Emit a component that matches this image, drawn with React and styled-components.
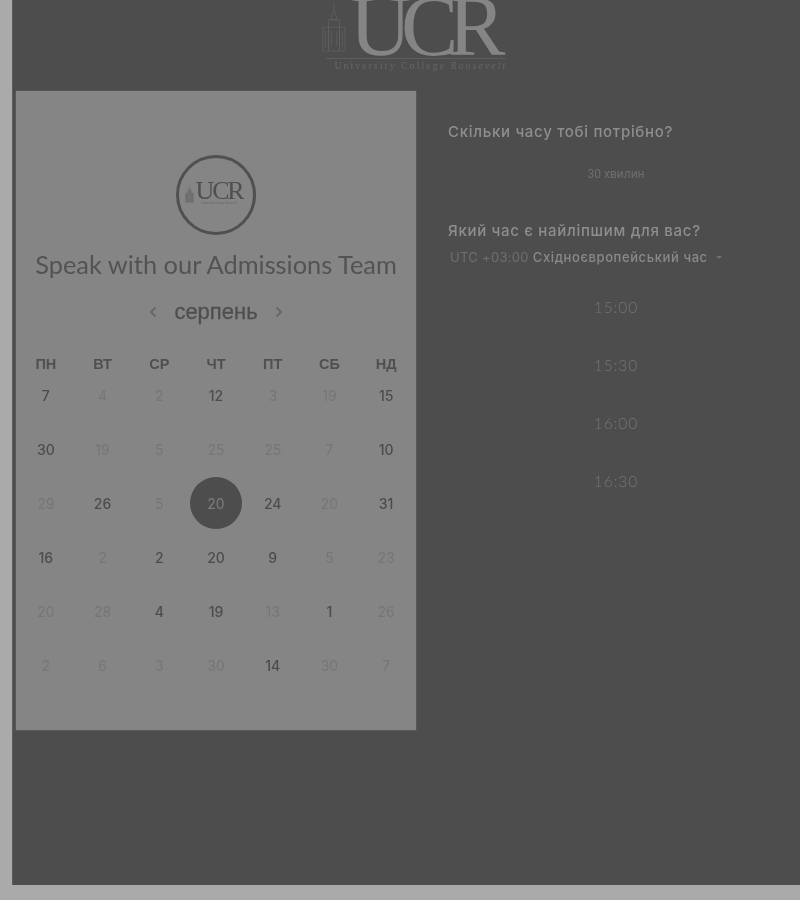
import React from 'react';
import styled, { createGlobalStyle } from 'styled-components';

const GlobalStyle = createGlobalStyle`
  html, body {
    margin: 0;
    padding: 0;
    background: #aaaaaa;
    font-family: "Liberation Sans", Arial, sans-serif;
  }
`;

const Page = styled.div`
  width: 800px;
  height: 900px;
  padding: 0 0 15px 12px;
  box-sizing: border-box;
  overflow: hidden;
`;

const Panel = styled.main`
  height: 100%;
  background: #4d4d4d;
  border-left: 1px solid #5c5c5c;
  box-sizing: border-box;
  overflow: hidden;
  filter: blur(0.35px);
`;

const LogoBar = styled.header`
  height: 91px;
  display: flex;
  justify-content: center;
  padding-left: 28px;
  box-sizing: border-box;
`;

const Logo = styled.div`
  position: relative;
  width: 190px;
  height: 91px;
`;

const LogoMark = styled.div`
  position: absolute;
  left: 24px;
  top: -10px;
  font-family: "Liberation Serif", serif;
  font-size: 86px;
  line-height: 72px;
  letter-spacing: -10.5px;
  color: #858585;
  white-space: nowrap;
`;

const LogoRule = styled.div`
  position: absolute;
  left: 0;
  top: 58px;
  width: 181px;
  height: 1px;
  background: #5c5c5c;
`;

const LogoTagline = styled.div`
  position: absolute;
  left: 9px;
  top: 61px;
  font-family: "Liberation Serif", serif;
  font-size: 9.5px;
  letter-spacing: 2.2px;
  color: #676767;
  white-space: nowrap;
`;

const TowerWrap = styled.div`
  position: absolute;
  left: -4px;
  top: 2px;
`;

const Columns = styled.div`
  display: flex;
  align-items: flex-start;
  padding-left: 3px;
`;

const Card = styled.section`
  width: 400px;
  height: 639px;
  background: #858585;
  box-shadow: 0 0 1px #8f8f8f;
  display: flex;
  flex-direction: column;
  align-items: center;
  padding-top: 64px;
  box-sizing: border-box;
`;

const Badge = styled.div`
  position: relative;
  width: 80px;
  height: 80px;
  border: 3px solid #505050;
  border-radius: 50%;
  box-sizing: border-box;
  display: flex;
  align-items: center;
  justify-content: center;
  flex-direction: column;
`;

const BadgeText = styled.div`
  font-family: "Liberation Serif", serif;
  font-size: 26px;
  line-height: 20px;
  letter-spacing: -2.2px;
  color: #4f4f4f;
  margin-left: 6px;
  margin-top: -4px;
`;

const BadgeSub = styled.div`
  font-family: "Liberation Serif", serif;
  font-size: 3px;
  line-height: 4px;
  color: #666666;
  margin-left: 6px;
`;

const BadgeTowerWrap = styled.div`
  position: absolute;
  left: 6px;
  top: 24px;
`;

const Title = styled.h1`
  margin: 12px 0 0;
  font-family: Lato, sans-serif;
  font-size: 25.4px;
  line-height: 34px;
  font-weight: 400;
  color: #535353;
  white-space: nowrap;
`;

const MonthRow = styled.div`
  display: flex;
  align-items: center;
  justify-content: center;
  gap: 15px;
  height: 30px;
  margin-top: 16px;
`;

const MonthName = styled.div`
  font-size: 22px;
  line-height: 30px;
  color: #4f4f4f;
  min-width: 86px;
  text-align: center;
  -webkit-text-stroke: 0.3px #4f4f4f;
`;

const Arrow = styled.svg`
  display: block;
  color: #666666;
`;

const HeadGrid = styled.div`
  width: 397px;
  margin-top: 22px;
  display: grid;
  grid-template-columns: repeat(7, 1fr);
`;

const DayHead = styled.div`
  height: 30px;
  display: flex;
  align-items: center;
  justify-content: center;
  font-size: 14.5px;
  font-weight: 700;
  color: #505050;
`;

const DayGrid = styled.div`
  width: 397px;
  margin-top: 5px;
  display: grid;
  grid-template-columns: repeat(7, 1fr);
  grid-auto-rows: 54px;
`;

const DayCell = styled.div`
  display: flex;
  align-items: flex-start;
  justify-content: center;
  padding-top: 1px;
`;

const DayNum = styled.span`
  width: ${(p) => (p.$selected ? '52px' : 'auto')};
  height: ${(p) => (p.$selected ? '52px' : '20px')};
  margin-top: ${(p) => (p.$selected ? '-16px' : '0')};
  border-radius: 50%;
  display: flex;
  align-items: center;
  justify-content: center;
  background: ${(p) => (p.$selected ? '#4d4d4d' : 'transparent')};
  font-family: Inter, sans-serif;
  font-size: 14px;
  font-weight: ${(p) => (p.$active ? 500 : 400)};
  color: ${(p) => (p.$selected ? '#7d7d7d' : p.$active ? '#4c4c4c' : '#767676')};
`;

const Side = styled.aside`
  margin-left: 32px;
  width: 320px;
  padding-top: 30px;
`;

const Question = styled.h2`
  margin: 0;
  font-family: Inter, sans-serif;
  font-size: 15px;
  line-height: 22px;
  font-weight: 500;
  letter-spacing: 0.7px;
  color: #8e8e8e;
  white-space: nowrap;
`;

const Duration = styled.div`
  width: 336px;
  margin-top: 21px;
  height: 20px;
  text-align: center;
  font-family: Roboto, sans-serif;
  font-size: 12px;
  line-height: 20px;
  color: #6e6e6e;
`;

const SecondQuestion = styled(Question)`
  margin-top: 36px;
`;

const Zone = styled.div`
  display: flex;
  align-items: center;
  margin-top: 4px;
  padding-left: 2px;
  height: 22px;
  font-family: Inter, sans-serif;
  font-size: 13px;
  letter-spacing: 0.3px;
  white-space: nowrap;
  color: #6f6f6f;
`;

const ZoneName = styled.span`
  margin-left: 4px;
  font-weight: 500;
  letter-spacing: 0.6px;
  color: #8a8a8a;
`;

const Caret = styled.span`
  margin-left: 8px;
  width: 0;
  height: 0;
  border-left: 3px solid transparent;
  border-right: 3px solid transparent;
  border-top: 3px solid #6f6f6f;
`;

const Slots = styled.div`
  width: 336px;
  margin-top: 28px;
  display: flex;
  flex-direction: column;
  gap: 36px;
`;

const Slot = styled.div`
  height: 22px;
  text-align: center;
  font-family: Lato, sans-serif;
  font-size: 15.5px;
  line-height: 22px;
  font-weight: 300;
  letter-spacing: 1px;
  color: #757575;
`;

const weekdays = ['ПН', 'ВТ', 'СР', 'ЧТ', 'ПТ', 'СБ', 'НД'];

// [number, active]
const days = [
  [7, 1], [4, 0], [2, 0], [12, 1], [3, 0], [19, 0], [15, 1],
  [30, 1], [19, 0], [5, 0], [25, 0], [25, 0], [7, 0], [10, 1],
  [29, 0], [26, 1], [5, 0], [20, 2], [24, 1], [20, 0], [31, 1],
  [16, 1], [2, 0], [2, 1], [20, 1], [9, 1], [5, 0], [23, 0],
  [20, 0], [28, 0], [4, 1], [19, 1], [13, 0], [1, 1], [26, 0],
  [2, 0], [6, 0], [3, 0], [30, 0], [14, 1], [30, 0], [7, 0],
];

const slots = ['15:00', '15:30', '16:00', '16:30'];

const Tower = ({ width, height, color, fill }) => (
  <svg width={width} height={height} viewBox="0 0 26 56" fill={fill || 'none'} stroke={color} strokeWidth="0.8">
    <path d="M13 0 L13 8 M9 18 L13 8 L17 18 Z M7 18 H19 V26 H7 Z" />
    <path d="M1 26 H7 V52 H1 Z M19 26 H25 V52 H19 Z M7 26 V52 H19 V26" />
    <path d="M10 30 V46 M16 30 V46 M4 30 V48 M22 30 V48" />
  </svg>
);

const App = () => (
  <>
    <GlobalStyle />
    <Page>
      <Panel>
        <LogoBar>
          <Logo>
            <TowerWrap>
              <Tower width={24} height={54} color="#626262" />
            </TowerWrap>
            <LogoMark>UCR</LogoMark>
            <LogoRule />
            <LogoTagline>University College <i>Roosevelt</i></LogoTagline>
          </Logo>
        </LogoBar>
        <Columns>
          <Card>
            <Badge>
              <BadgeTowerWrap>
                <Tower width={9} height={24} color="#6f6f6f" fill="#727272" />
              </BadgeTowerWrap>
              <BadgeText>UCR</BadgeText>
              <BadgeSub>University College Roosevelt</BadgeSub>
            </Badge>
            <Title>Speak with our Admissions Team</Title>
            <MonthRow>
              <Arrow width="10" height="14" viewBox="0 0 10 14" fill="none" stroke="currentColor" strokeWidth="1.8">
                <path d="M7.5 2.5 L3 7 L7.5 11.5" />
              </Arrow>
              <MonthName>серпень</MonthName>
              <Arrow width="10" height="14" viewBox="0 0 10 14" fill="none" stroke="currentColor" strokeWidth="1.8">
                <path d="M2.5 2.5 L7 7 L2.5 11.5" />
              </Arrow>
            </MonthRow>
            <HeadGrid>
              {weekdays.map((d) => (
                <DayHead key={d}>{d}</DayHead>
              ))}
            </HeadGrid>
            <DayGrid>
              {days.map(([n, state], i) => (
                <DayCell key={i}>
                  <DayNum $active={state === 1} $selected={state === 2}>{n}</DayNum>
                </DayCell>
              ))}
            </DayGrid>
          </Card>
          <Side>
            <Question>Скільки часу тобі потрібно?</Question>
            <Duration>30 хвилин</Duration>
            <SecondQuestion>Який час є найліпшим для вас?</SecondQuestion>
            <Zone>
              UTC +03:00
              <ZoneName>Східноєвропейський час</ZoneName>
              <Caret />
            </Zone>
            <Slots>
              {slots.map((s) => (
                <Slot key={s}>{s}</Slot>
              ))}
            </Slots>
          </Side>
        </Columns>
      </Panel>
    </Page>
  </>
);

export default App;
